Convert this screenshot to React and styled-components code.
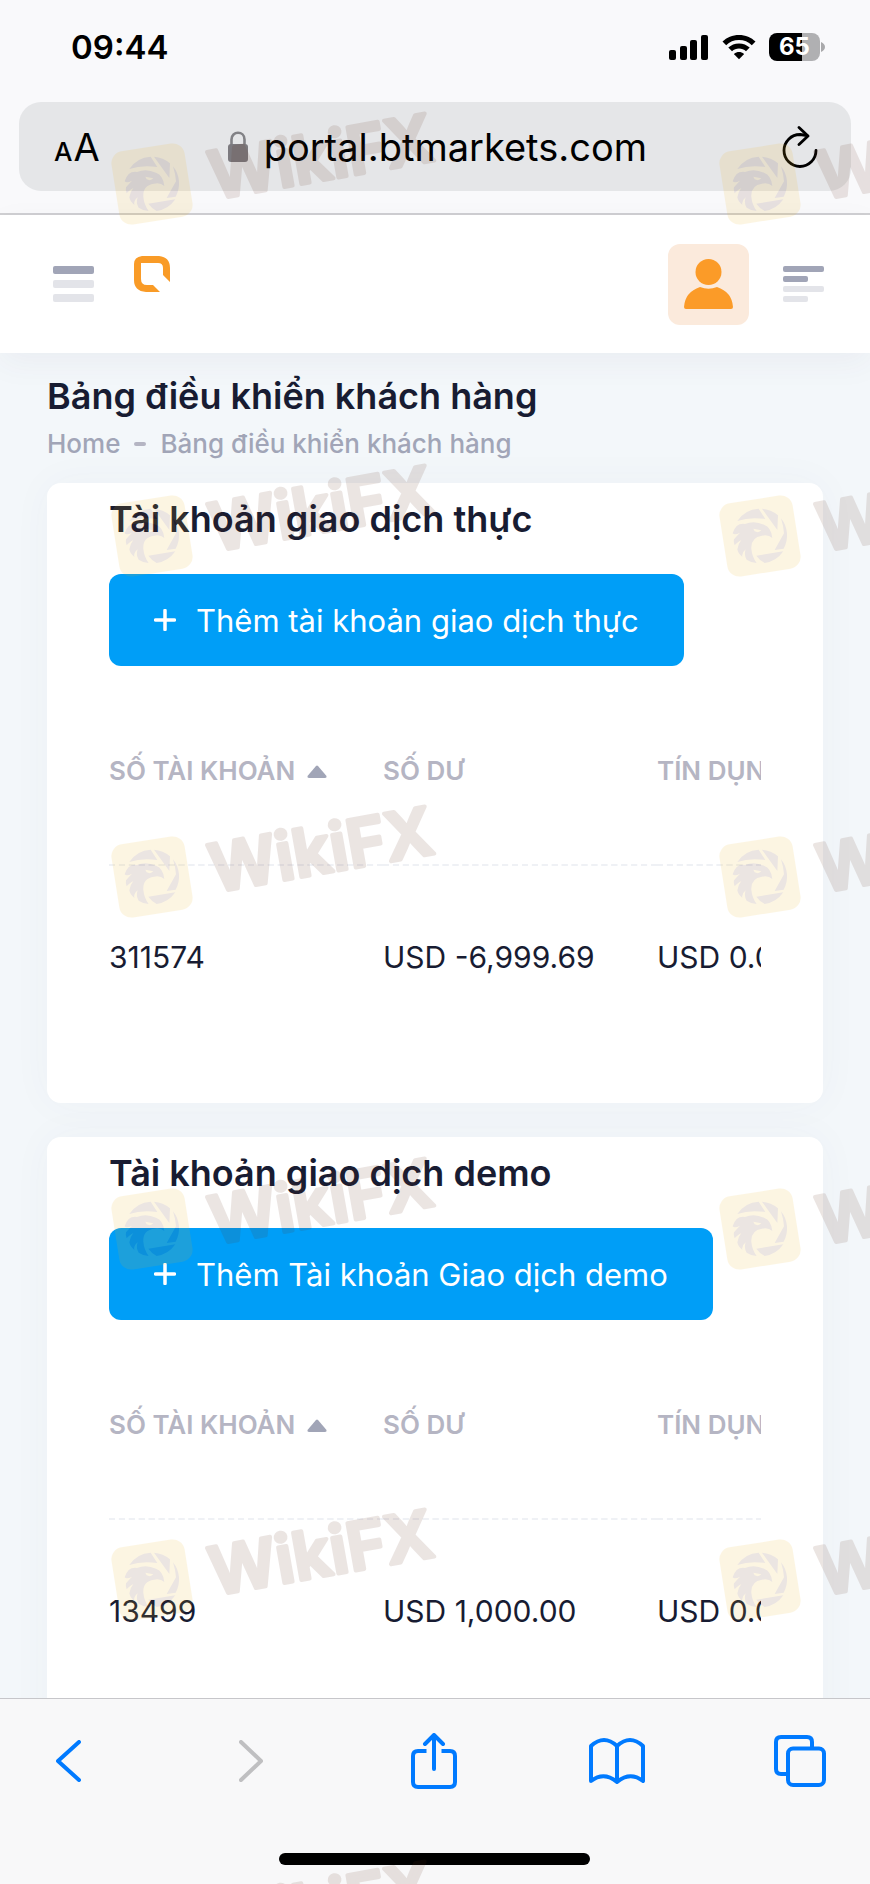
import React, { useState } from 'react';
import styled, { createGlobalStyle } from 'styled-components';

const tables = [
    {
        title: "Tài khoản giao dịch thực",
        action: "Thêm tài khoản giao dịch thực",
        rows: [{ number: "311574", balance: "USD -6,999.69", credit: "USD 0.00" }],
    },
    {
        title: "Tài khoản giao dịch demo",
        action: "Thêm Tài khoản Giao dịch demo",
        rows: [{ number: "13499", balance: "USD 1,000.00", credit: "USD 0.00" }],
    },
];

const stampRows = [132, 484, 825, 1177, 1528, 1880];
const stampColumns = [100, 708];

const Stamp = ({ top, left }) => (
    <StampSvg viewBox="0 0 360 150" $top={top} $left={left} aria-hidden="true">
        <g transform="translate(52 52)">
            <rect x="-37" y="-37" width="74" height="74" rx="12" fill="#eeb41e" transform="rotate(-9)" />
            <g transform="scale(0.3333)" fill="#61301e">
                <circle r="82" fill="#eeb41e" />
                <path d="M-68 -45 A82 82 0 0 1 -4 -82 L16 -51 Q-30 -58 -68 -45 Z" />
                <path d="M6 -82 A82 82 0 0 1 54 -62 L52 -18 Z" />
                <path d="M63 -53 A82 82 0 0 1 71 38 L44 42 L72 -8 Q70 -32 63 -53 Z" />
                <path d="M-11 59 L70 46 A82 82 0 0 1 14 81 Q-2 72 -11 59 Z" />
                <path d="M-82 -8 Q-72 -40 -45 -36 Q-18 -48 12 -34 Q34 -26 37 6 Q24 -6 6 -1 Q-28 4 -26 38 Q-24 62 -10 81 Q-27 80 -40 71 Q-49 56 -43 40 Q-56 51 -53 63 Q-66 52 -68 40 Q-66 24 -56 12 Q-72 22 -76 28 Q-80 16 -78 10 Q-68 -2 -60 -10 Q-76 -2 -82 -8 Z" />
                <path d="M-20 -22 L4 -17 Q-4 -8 -16 -14 Z" fill="#eeb41e" />
            </g>
            <StampText transform="rotate(-10)" x="58" y="26">WikiFX</StampText>
        </g>
    </StampSvg>
);

const SortArrow = () => (
    <svg width="20" height="14" viewBox="0 0 20 14" aria-hidden="true">
        <path d="M9 2 Q10 1 11 2 L19.500 12 Q20 14 18 14 H2 Q0 14 .5 12 Z" fill="#a1a5b7" />
    </svg>
);

const StatusIcons = () => (
    <Signals>
        <svg width="40" height="26" viewBox="0 0 40 26" aria-hidden="true">
            <rect x="0" y="16" width="7" height="10" rx="2" />
            <rect x="11" y="12" width="7" height="14" rx="2" />
            <rect x="21" y="6" width="7" height="20" rx="2" />
            <rect x="32" y="1" width="7" height="25" rx="2" />
        </svg>
        <svg width="34" height="26" viewBox="0 0 34 26" aria-hidden="true">
            <path d="M17 1 C10.500 1 4.700 3.500 .5 7.600 L4.200 11.200 C7.500 8 12 6.100 17 6.100 S26.500 8 29.800 11.200 L33.500 7.600 C29.300 3.500 23.500 1 17 1 Z" />
            <path d="M17 9.500 C12.800 9.500 9.100 11.100 6.300 13.600 L10 17.200 C11.900 15.500 14.300 14.500 17 14.500 S22.100 15.500 24 17.200 L27.700 13.600 C24.900 11.100 21.200 9.500 17 9.500 Z" />
            <path d="M17 18 C15.200 18 13.500 18.600 12.200 19.700 Q12 20 12.300 20.400 L17 25.200 L21.700 20.400 Q22 20 21.800 19.700 C20.500 18.600 18.800 18 17 18 Z" />
        </svg>
        <Battery>
            <Charge style={{ "--level": "65%" }}>65</Charge>
            <svg width="4" height="10" viewBox="0 0 4 10" aria-hidden="true">
                <path d="M0 0 Q4 2 4 5 Q4 8 0 10 Z" fill="#a9a9ab" />
            </svg>
        </Battery>
    </Signals>
);

const AccountCard = ({ title, action, rows }) =>
{
    const [ascending, setAscending] = useState(true);

    return (
        <Card>
            <CardTitle>{title}</CardTitle>
            <AddButton>
                <svg width="22" height="22" viewBox="0 0 22 22" aria-hidden="true">
                    <path d="M11 1.500 V20.500 M1.500 11 H20.500" stroke="#fff" strokeWidth="3.500" strokeLinecap="round" />
                </svg>
                {action}
            </AddButton>
            <TableScroll>
                <Table>
                    <thead>
                        <tr>
                            <th aria-sort={ascending ? "ascending" : "descending"}>
                                <SortButton onClick={() => setAscending(!ascending)} $flip={!ascending}>
                                    Số tài khoản
                                    <SortArrow />
                                </SortButton>
                            </th>
                            <th>Số dư</th>
                            <th>Tín dụng</th>
                        </tr>
                    </thead>
                    <tbody>
                        {rows.map((row) => (
                            <tr key={row.number}>
                                <td>{row.number}</td>
                                <td>{row.balance}</td>
                                <td>{row.credit}</td>
                            </tr>
                        ))}
                    </tbody>
                </Table>
            </TableScroll>
        </Card>
    );
};

const App = () => (
    <>
        <GlobalStyle />
        <Screen>
            <BrowserTop>
                <StatusBar>
                    <Clock>09:44</Clock>
                    <StatusIcons />
                </StatusBar>
                <AddressBar>
                    <TextSize aria-label="Text size"><small>A</small>A</TextSize>
                    <Address>
                        <svg width="22" height="32" viewBox="0 0 22 32" aria-hidden="true">
                            <path d="M4.500 14 V8.500 C4.500 -.5 17.500 -.5 17.500 8.500 V14" fill="none" stroke="#828286" strokeWidth="2.600" />
                            <rect x="1" y="13" width="20" height="18" rx="3" fill="#7c7a7f" />
                        </svg>
                        portal.btmarkets.com
                    </Address>
                    <IconButton aria-label="Reload">
                        <svg width="36" height="42" viewBox="0 0 36 42" fill="none" stroke="#000" strokeWidth="2.800" strokeLinecap="round" strokeLinejoin="round" aria-hidden="true">
                            <path d="M34 24.500 A16 16 0 1 1 18 8.500 L25 9.500" />
                            <path d="M17 1.500 L26 10 L17 18.500" />
                        </svg>
                    </IconButton>
                </AddressBar>
            </BrowserTop>

            <Header>
                <HeaderGroup>
                    <IconButton aria-label="Menu">
                        <svg width="41" height="36" viewBox="0 0 41 36" fill="#a1a5b7" aria-hidden="true">
                            <rect width="41" height="8" rx="2" />
                            <rect y="14" width="41" height="8" rx="2" opacity=".3" />
                            <rect y="28" width="41" height="8" rx="2" opacity=".3" />
                        </svg>
                    </IconButton>
                    <Logo href="#home" aria-label="BT Markets">
                        <svg width="36" height="36" viewBox="0 0 36 36" aria-hidden="true">
                            <path d="M8 0 H25 Q36 1 36 12 V26 L29 19 V12 Q29 7 24 7 H7 V23 Q7 29 13 29 H19 L26 36 H12 Q0 35 0 24 V8 Q0 1 8 0 Z" fill="#f99b27" />
                        </svg>
                    </Logo>
                </HeaderGroup>
                <HeaderGroup>
                    <Avatar aria-label="Profile">
                        <svg width="49" height="50" viewBox="0 0 49 50" fill="#fb9b28" aria-hidden="true">
                            <circle cx="24.500" cy="13" r="13" />
                            <path d="M16 28 Q24.500 31.500 33 28 Q48 33 49 48 Q49 50 47 50 H2 Q0 50 0 48 Q1 33 16 28 Z" />
                        </svg>
                    </Avatar>
                    <IconButton aria-label="Sidebar">
                        <svg width="41" height="36" viewBox="0 0 41 36" fill="#a1a5b7" aria-hidden="true">
                            <rect width="41" height="6" rx="2" />
                            <rect y="10" width="25" height="6" rx="2" />
                            <rect y="20" width="41" height="6" rx="2" opacity=".3" />
                            <rect y="30" width="25" height="6" rx="2" opacity=".3" />
                        </svg>
                    </IconButton>
                </HeaderGroup>
            </Header>

            <Main>
                <PageTitle>Bảng điều khiển khách hàng</PageTitle>
                <Breadcrumb aria-label="Breadcrumb">
                    <a href="#home">Home</a>
                    <Dash />
                    <span>Bảng điều khiển khách hàng</span>
                </Breadcrumb>
                <Cards>
                    {tables.map((table) => <AccountCard key={table.title} {...table} />)}
                </Cards>
            </Main>

            <BrowserBottom>
                <Tools>
                    <IconButton aria-label="Back">
                        <svg width="25" height="42" viewBox="0 0 25 42" aria-hidden="true">
                            <path d="M23 2 L2 21 L23 40" />
                        </svg>
                    </IconButton>
                    <IconButton aria-label="Forward" disabled>
                        <svg width="25" height="42" viewBox="0 0 25 42" aria-hidden="true">
                            <path d="M2 2 L22 21 L2 40" />
                        </svg>
                    </IconButton>
                    <IconButton aria-label="Share">
                        <svg width="46" height="56" viewBox="0 0 46 56" aria-hidden="true">
                            <path d="M15.500 18 H7 Q2 18 2 23 V49 Q2 54 7 54 H39 Q44 54 44 49 V23 Q44 18 39 18 H30.500" strokeLinecap="butt" />
                            <path d="M23 36 V2 M14 11 L23 2 L32 11" />
                        </svg>
                    </IconButton>
                    <IconButton aria-label="Bookmarks">
                        <svg width="56" height="48" viewBox="0 0 56 48" aria-hidden="true">
                            <path d="M28 9 Q15 -3 2 9 V44 Q15 34 28 45 Q41 34 54 44 V9 Q41 -3 28 9 V45" />
                        </svg>
                    </IconButton>
                    <IconButton aria-label="Tabs">
                        <svg width="52" height="52" viewBox="0 0 52 52" aria-hidden="true">
                            <rect x="14" y="13.500" width="36" height="36.500" rx="5" />
                            <path d="M14 39 H7 Q2 39 2 34 V7 Q2 2 7 2 H33 Q38 2 38 7 V13" />
                        </svg>
                    </IconButton>
                </Tools>
                <HomeIndicator />
            </BrowserBottom>

            <Stamps>
                {stampRows.map((top) => stampColumns.map((left) => (
                    <Stamp key={`${top}-${left}`} top={top} left={left} />
                )))}
            </Stamps>
        </Screen>
    </>
);

const GlobalStyle = createGlobalStyle`
    *
    {
        box-sizing: border-box;
    }

    body
    {
        margin: 0;
        font-family: Inter, "Liberation Sans", sans-serif;
        color: #181c32;
    }

    button
    {
        font-family: inherit;
        padding: 0;
        border: none;
        background: transparent;
        cursor: pointer;
    }

    svg
    {
        display: block;
        flex-shrink: 0;
    }
`;

const Screen = styled.div`
    position: relative;
    display: flex;
    flex-direction: column;
    height: 100vh;
    overflow: hidden;
    background: #f3f7fa;
`;

const BrowserTop = styled.div`
    flex-shrink: 0;
    padding: 0 19px 22px;
    background: #f9f9fb;
    border-bottom: 2px solid #cfcfd2;
`;

const StatusBar = styled.div`
    display: flex;
    justify-content: space-between;
    align-items: center;
    height: 102px;
    padding: 0 26px 8px 52px;
    color: #000;
`;

const Clock = styled.time`
    font-size: 33px;
    font-weight: 600;
`;

const Signals = styled.div`
    display: flex;
    align-items: center;
    gap: 13px;
`;

const Battery = styled.div`
    display: flex;
    align-items: center;
    gap: 1px;
`;

const Charge = styled.span`
    width: 51px;
    border-radius: 8px;
    background: linear-gradient(90deg, #000 var(--level), #b0b0b2 var(--level));
    color: #fff;
    font-size: 24px;
    font-weight: 700;
    line-height: 28px;
    text-align: center;
`;

const AddressBar = styled.div`
    display: flex;
    align-items: center;
    justify-content: space-between;
    height: 89px;
    padding: 0 33px 0 35px;
    border-radius: 22px;
    background: #e5e6e8;
`;

const IconButton = styled.button`
    display: flex;
    align-items: center;
    justify-content: center;
`;

const TextSize = styled.button`
    display: flex;
    align-items: baseline;
    gap: 1px;
    color: #000;
    font-size: 38px;
    line-height: 48px;

    small
    {
        font-size: 26px;
        font-weight: 500;
        line-height: 26px;
    }
`;

const Address = styled.button`
    display: flex;
    align-items: center;
    gap: 15px;
    padding-right: 8px;
    color: #000;
    font-size: 38px;
    line-height: 44px;
`;

const Header = styled.header`
    flex-shrink: 0;
    display: flex;
    align-items: center;
    justify-content: space-between;
    height: 138px;
    padding: 0 46px 0 53px;
    background: #fff;
    box-shadow: 0 10px 30px rgba(82, 63, 105, 0.05);
`;

const HeaderGroup = styled.div`
    display: flex;
    align-items: center;
    gap: 34px;
`;

const Logo = styled.a`
    padding: 0 6px 20px;
`;

const Avatar = styled.button`
    display: flex;
    align-items: center;
    justify-content: center;
    width: 81px;
    height: 81px;
    border-radius: 12px;
    background: #fbeadc;
`;

const Main = styled.main`
    flex: 1;
    min-height: 0;
    overflow: hidden;
    padding: 19px 47px 0;
`;

const PageTitle = styled.h1`
    margin: 0;
    font-size: 36px;
    font-weight: 600;
    line-height: 48px;
`;

const Breadcrumb = styled.nav`
    display: flex;
    align-items: center;
    gap: 14px;
    margin-bottom: 15px;
    color: #a1a5b7;
    font-size: 26px;
    font-weight: 500;
    line-height: 48px;

    a
    {
        color: inherit;
        text-decoration: none;
    }
`;

const Dash = styled.span`
    width: 12px;
    height: 4px;
    border-radius: 2px;
    background: #b5b5c3;
`;

const Cards = styled.div`
    display: flex;
    flex-direction: column;
    gap: 34px;
`;

const Card = styled.section`
    padding: 12px 62px 55px;
    border-radius: 14px;
    background: #fff;
    box-shadow: 0 0 40px rgba(76, 87, 125, 0.04);
`;

const CardTitle = styled.h2`
    margin: 0 0 31px;
    font-size: 36px;
    font-weight: 600;
    line-height: 48px;
`;

const AddButton = styled.button`
    display: flex;
    align-items: center;
    gap: 20px;
    height: 92px;
    padding: 0 45px;
    border-radius: 12px;
    background: #009ef7;
    color: #fff;
    font-size: 31px;
    font-weight: 400;
    white-space: nowrap;
`;

const TableScroll = styled.div`
    margin-top: 9px;
    overflow: hidden;
`;

const Table = styled.table`
    width: 822px;
    table-layout: fixed;
    border-collapse: collapse;

    th
    {
        height: 190px;
        padding: 2px 0 0;
        border-bottom: 2px dashed #eff1f5;
        color: #b5b5c3;
        font-size: 26px;
        font-weight: 600;
        text-align: left;
        text-transform: uppercase;
        white-space: nowrap;
    }

    td
    {
        height: 183px;
        padding: 0;
        font-size: 30px;
        white-space: nowrap;
    }
`;

const SortButton = styled.button`
    display: flex;
    align-items: center;
    gap: 12px;
    color: inherit;
    font-size: inherit;
    font-weight: inherit;
    text-transform: inherit;

    svg
    {
        transform: ${(props) => props.$flip ? "rotate(180deg)" : "none"};
    }
`;

const BrowserBottom = styled.footer`
    flex-shrink: 0;
    display: flex;
    flex-direction: column;
    align-items: center;
    justify-content: space-between;
    height: 186px;
    padding: 34px 42px 19px 40px;
    border-top: 1px solid #c6c6ca;
    background: #f8f8f9;
`;

const Tools = styled.div`
    display: flex;
    align-items: center;
    justify-content: space-between;
    width: 100%;

    button
    {
        width: 56px;
    }

    svg
    {
        fill: none;
        stroke: #007aff;
        stroke-width: 4px;
        stroke-linecap: round;
        stroke-linejoin: round;
    }

    button:disabled svg
    {
        stroke: #bfbfc1;
    }
`;

const HomeIndicator = styled.div`
    width: 311px;
    height: 12px;
    border-radius: 6px;
    background: #000;
`;

const Stamps = styled.div`
    position: absolute;
    inset: 0;
    overflow: hidden;
    pointer-events: none;
`;

const StampSvg = styled.svg`
    position: absolute;
    top: ${(props) => props.$top}px;
    left: ${(props) => props.$left}px;
    width: 360px;
    height: 150px;
    overflow: visible;
    opacity: 0.12;
`;

const StampText = styled.text`
    fill: #61301e;
    stroke: #61301e;
    stroke-width: 4px;
    stroke-linejoin: round;
    font-size: 66px;
    font-weight: 600;
`;

export default App;
